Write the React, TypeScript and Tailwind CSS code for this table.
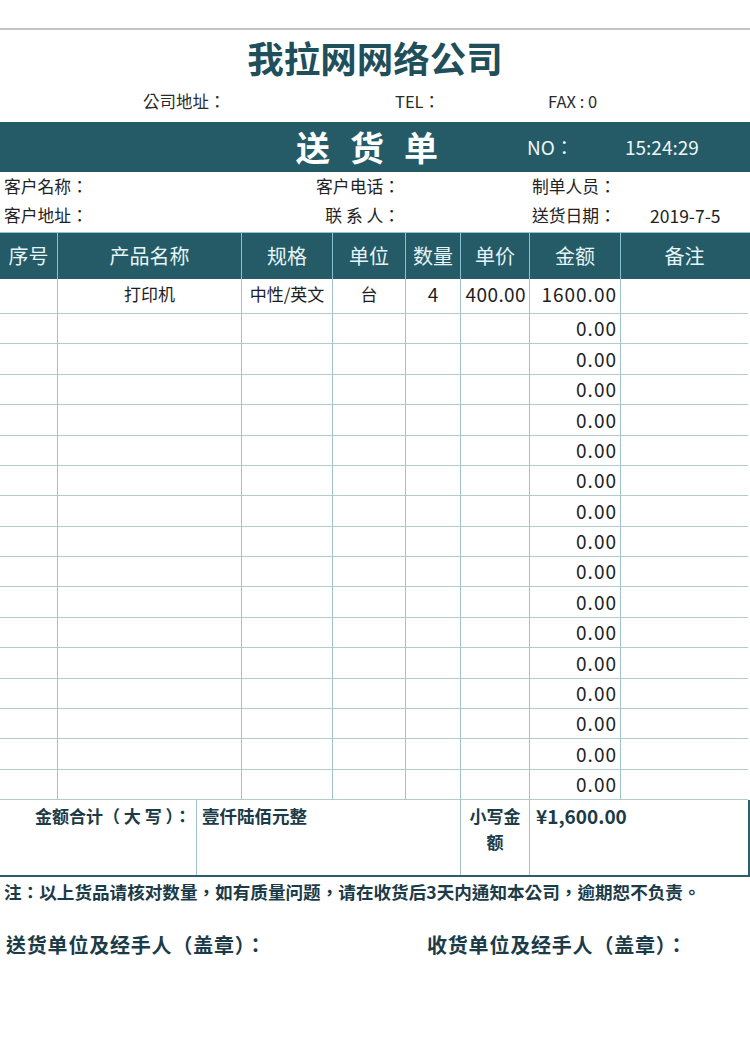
import React from "react";

const COLS = "grid grid-cols-[58px_184px_91px_73px_55px_69px_91px_127px]";
const HEADERS = ["序号", "产品名称", "规格", "单位", "数量", "单价", "金额", "备注"];
// row heights so 16 blank rows fill 314..800
const ROW_H = ["h-[30px]", "h-[31px]", "h-[30px]", "h-[31px]", "h-[30px]", "h-[30px]", "h-[31px]", "h-[30px]"];
// centred full-width punctuation, like the sheet's font
const PUNCT = "font-['Noto_Sans_CJK_TC',sans-serif]";

function Cell({
  children,
  className = "",
  last = false,
}: {
  children?: React.ReactNode;
  className?: string;
  last?: boolean;
}) {
  return (
    <div
      className={[
        "flex items-center border-b border-[#b3cbcf] px-[3px] text-[17px] text-[#1e1e1e]",
        last ? "" : "border-r border-r-[#9fc2ca]",
        className,
      ].join(" ")}
    >
      {children}
    </div>
  );
}

function BlankRow({ h }: { h: string }) {
  return (
    <div className={`${COLS} ${h}`}>
      {Array.from({ length: 8 }).map((_, i) => (
        <Cell key={i} last={i === 7} className={i === 6 ? "justify-end text-[19px] tracking-[1px]" : ""}>
          {i === 6 ? "0.00" : null}
        </Cell>
      ))}
    </div>
  );
}

export default function App() {
  return (
    <div className="h-[1058px] w-[750px] bg-white pt-[28px] font-['Noto_Sans_CJK_SC',sans-serif] text-[#222]">
      <div className="h-[2px] bg-[#c4c4c4]" />

      <h1 className="mt-[6px] text-center text-[36.5px] font-bold leading-[44px] text-[#1f4f5b]">
        我拉网网络公司
      </h1>

      <div className={`${PUNCT} mt-[10px] grid h-[22px] grid-cols-[143px_252px_153px_1fr] items-center text-[16.5px] leading-none text-[#2a2a2a]`}>
        <span />
        <span>公司地址：</span>
        <span>TEL：</span>
        <span>FAX : 0</span>
      </div>

      <div className="mt-[10px] grid h-[50px] grid-cols-[296px_231px_98px_1fr] items-center bg-[#245b67] text-white">
        <span />
        <span className="text-[34px] font-bold leading-none tracking-[20px]">送货单</span>
        <span className={`${PUNCT} text-[19px] text-[#eef6f7]`}>NO：</span>
        <span className="text-[19px] text-[#eef6f7]">15:24:29</span>
      </div>

      <div className={`${PUNCT} text-[16.8px] leading-none text-[#222]`}>
        <div className="flex h-[29px] items-center pl-[4px]">
          <span className="w-[311px]">客户名称：</span>
          <span className="w-[85px] text-right">客户电话：</span>
          <span className="w-[132px]" />
          <span>制单人员：</span>
        </div>
        <div className="flex h-[29px] items-center pl-[4px]">
          <span className="w-[311px]">客户地址：</span>
          <span className="w-[85px] text-right">联 系 人：</span>
          <span className="w-[132px]" />
          <span className="w-[118px]">送货日期：</span>
          <span className="text-[17.5px]">2019-7-5</span>
        </div>
      </div>

      <div className="mt-[2px]">
        <div className={`${COLS} h-[47px] border-t border-[#8cc6d5] bg-[#245b67]`}>
          {HEADERS.map((h, i) => (
            <div
              key={h}
              className={[
                "flex items-center justify-center text-[20px] text-[#e6f4f6]",
                i === 7 ? "" : "border-r border-[#86c2d3]",
              ].join(" ")}
            >
              {h}
            </div>
          ))}
        </div>

        <div className={`${COLS} h-[35px]`}>
          <Cell className="pb-[4px]" />
          <Cell className="justify-center pb-[4px]">打印机</Cell>
          <Cell className="justify-center pb-[4px]">中性/英文</Cell>
          <Cell className="justify-center pb-[4px]">台</Cell>
          <Cell className="justify-center pb-[4px] text-[19px]">4</Cell>
          <Cell className="justify-end pb-[4px] text-[19px] tracking-[0.4px]">400.00</Cell>
          <Cell className="justify-end pb-[4px] text-[19px] tracking-[1px]">1600.00</Cell>
          <Cell last />
        </div>

        {Array.from({ length: 16 }).map((_, i) => (
          <BlankRow key={i} h={ROW_H[i % 8]} />
        ))}

        <div className="grid h-[77px] grid-cols-[197px_264px_69px_1fr] border-b-2 border-r-2 border-[#2b5f6c] text-[17px] font-bold text-[#1b3b48]">
          <div className={`${PUNCT} border-r border-[#9fc2ca] pr-[5px] pt-[3px] text-right`}>金额合计（ 大 写 ）：</div>
          <div className="border-r border-[#9fc2ca] pl-[5px] pt-[3px] text-[17.5px]">壹仟陆佰元整</div>
          <div className="border-r border-[#9fc2ca] px-[6px] pt-[3px] text-center leading-[26px]">小写金额</div>
          <div className="pl-[6px] pt-[2px] text-[19px]">¥1,600.00</div>
        </div>
      </div>

      <p className={`${PUNCT} mt-[3px] h-[24px] pl-[4px] text-[17.6px] font-bold leading-[24px] text-[#1b3b48]`}>
        注：以上货品请核对数量，如有质量问题，请在收货后3天内通知本公司，逾期恕不负责。
      </p>

      <div className={`${PUNCT} mt-[27px] grid grid-cols-[421px_1fr] pl-[6px] text-[20px] font-bold leading-[28px] tracking-[0.8px] text-[#1b3b48]`}>
        <span>送货单位及经手人（盖章）：</span>
        <span>收货单位及经手人（盖章）：</span>
      </div>
    </div>
  );
}
